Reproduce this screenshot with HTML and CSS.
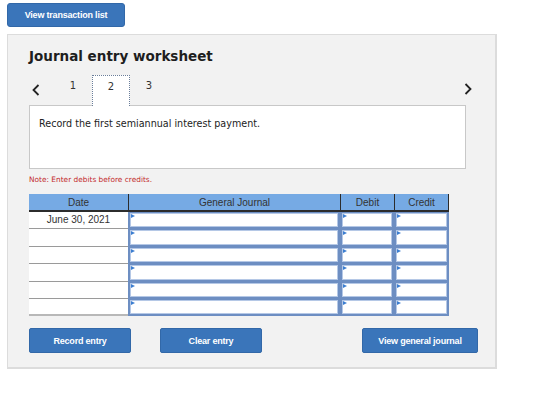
FILE: index.html
```html
<!DOCTYPE html>
<html lang="en">
<head>
    <meta charset="UTF-8">
    <meta name="viewport" content="width=device-width, initial-scale=1.0">
    <title>Journal entry worksheet</title>
    <link rel="stylesheet" href="styles.css">
</head>
<body>
    <button class="btn btn-top" type="button">View transaction list</button>

    <div class="worksheet">
        <h2>Journal entry worksheet</h2>

        <div class="tabs">
            <span class="arrow">
                <svg width="8" height="12" viewBox="0 0 8 12"><polyline points="6.5,1 1.5,6 6.5,11" fill="none" stroke="#222" stroke-width="1.8"/></svg>
            </span>
            <span class="tab">1</span>
            <span class="tab active">2</span>
            <span class="tab">3</span>
            <span class="arrow arrow-right">
                <svg width="8" height="12" viewBox="0 0 8 12"><polyline points="1.5,1 6.5,6 1.5,11" fill="none" stroke="#222" stroke-width="1.8"/></svg>
            </span>
        </div>

        <div class="question">Record the first semiannual interest payment.</div>

        <p class="note">Note: Enter debits before credits.</p>

        <div class="journal">
            <div class="head">Date</div>
            <div class="head">General Journal</div>
            <div class="head">Debit</div>
            <div class="head">Credit</div>

            <div class="date">June 30, 2021</div>
            <div class="cell"></div><div class="cell"></div><div class="cell"></div>

            <div class="date"></div>
            <div class="cell"></div><div class="cell"></div><div class="cell"></div>

            <div class="date"></div>
            <div class="cell"></div><div class="cell"></div><div class="cell"></div>

            <div class="date"></div>
            <div class="cell"></div><div class="cell"></div><div class="cell"></div>

            <div class="date"></div>
            <div class="cell"></div><div class="cell"></div><div class="cell"></div>

            <div class="date last"></div>
            <div class="cell"></div><div class="cell"></div><div class="cell"></div>
        </div>

        <div class="actions">
            <button class="btn btn-record" type="button">Record entry</button>
            <button class="btn btn-clear" type="button">Clear entry</button>
            <button class="btn btn-view" type="button">View general journal</button>
        </div>
    </div>
</body>
</html>
```

FILE: styles.css
```css
body {
    margin: 0;
    padding: 3px 0 0 7px;
    background-color: #ffffff;
    font-family: "DejaVu Sans", Verdana, sans-serif;
    color: #222222;
}
.btn {
    display: block;
    flex-shrink: 0;
    height: 24px;
    padding: 0;
    background-color: #3a75ba;
    border: 1px solid #3268a8;
    border-radius: 2px;
    color: #ffffff;
    font-family: "Liberation Sans", Arial, sans-serif;
    font-size: 9px;
    font-weight: bold;
    letter-spacing: -0.2px;
    cursor: pointer;
}
.btn-top {
    width: 118px;
    border-radius: 3px;
}
.worksheet {
    box-sizing: border-box;
    width: 490px;
    height: 335px;
    margin-top: 7px;
    padding: 12px 29px 0 21px;
    background-color: #f2f2f2;
    border: 1px solid #dcdcdc;
    border-right-width: 2px;
    border-bottom-width: 2px;
}
.worksheet h2 {
    margin: 0;
    height: 28px;
    font-size: 13.5px;
    font-weight: bold;
    line-height: 19px;
    color: #1e1e1e;
}
.tabs {
    display: flex;
    align-items: center;
    height: 30px;
}
.arrow {
    display: flex;
    width: 22px;
    padding-left: 3px;
}
.arrow-right {
    margin-left: auto;
    margin-right: -6px;
    width: auto;
    padding: 0 0 2px 0;
}
.tab {
    box-sizing: border-box;
    width: 38px;
    height: 30px;
    line-height: 22px;
    text-align: center;
    font-size: 10px;
    color: #333333;
}
.tab.active {
    height: 31px;
    margin-bottom: -1px;
    background-color: #ffffff;
    border: 1px dotted #6a7e9a;
    border-bottom: none;
}
.question {
    box-sizing: border-box;
    height: 64px;
    padding: 12px 9px;
    background-color: #ffffff;
    border: 1px solid #c8c8c8;
    font-size: 9.6px;
    color: #222222;
}
.note {
    margin: 6px 0 0 0;
    height: 14px;
    font-size: 7.4px;
    color: #c2292a;
}
.journal {
    display: grid;
    grid-template-columns: 99px 212px 54px 55px;
    grid-auto-rows: 17.4px;
    grid-template-rows: 18px;
    width: 420px;
    margin-top: 5px;
    font-family: "Liberation Sans", Arial, sans-serif;
    font-size: 10px;
    color: #333333;
}
.head {
    box-sizing: border-box;
    background-color: #76aae4;
    border-bottom: 2px solid #2c2c2c;
    border-left: 1px solid #2c2c2c;
    text-align: center;
    line-height: 17px;
}
.head:first-child {
    border-left: none;
}
.head:nth-child(4) {
    border-right: 1px solid #2c2c2c;
}
.date {
    box-sizing: border-box;
    background-color: #ffffff;
    border-bottom: 1px solid #9a9a9a;
    text-align: center;
    line-height: 16px;
}
.date.last {
    border-bottom: 2px solid #b8b8b8;
}
.cell {
    box-sizing: border-box;
    position: relative;
    background-color: #ffffff;
    border: 2px solid #6d8ec2;
    border-top-width: 1px;
    box-shadow: inset 0 0 0 1px #b5c8e6;
}
.cell::before {
    content: "";
    position: absolute;
    top: 1px;
    left: 1px;
    border-left: 4px solid #3c7ed0;
    border-top: 2px solid transparent;
    border-bottom: 2px solid transparent;
}
.actions {
    display: flex;
    margin-top: 12px;
}
.btn-record {
    width: 102px;
    height: 25px;
}
.btn-clear {
    width: 102px;
    height: 25px;
    margin-left: 29px;
}
.btn-view {
    width: 116px;
    height: 25px;
    margin-left: 100px;
}
```
